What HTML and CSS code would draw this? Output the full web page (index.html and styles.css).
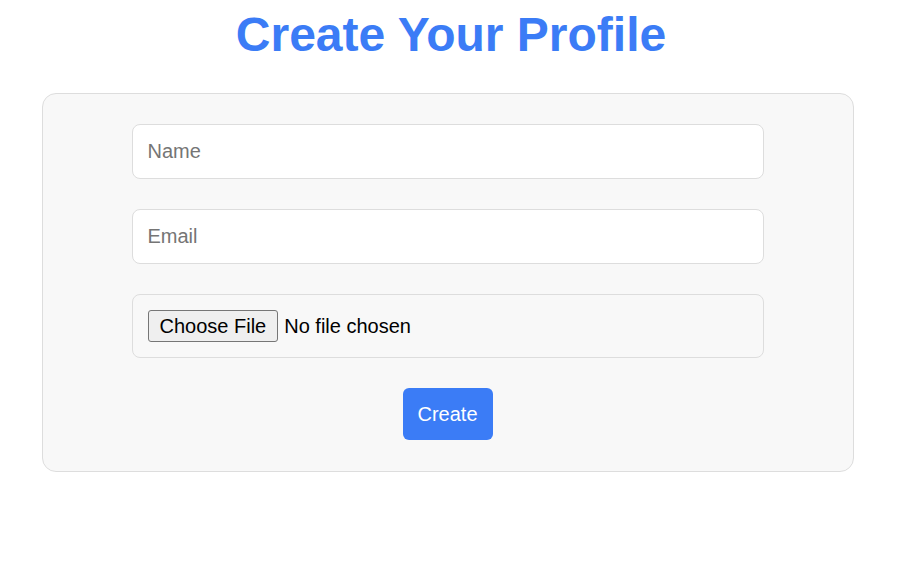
FILE: index.html
```html
<!DOCTYPE html>
<html lang="en">
<head>
<meta charset="utf-8">
<title>Create Your Profile</title>
<link rel="stylesheet" href="styles.css">
</head>
<body>
<main class="page">
  <h1 class="title">Create Your Profile</h1>
  <form class="card">
    <input class="field" type="text" placeholder="Name">
    <input class="field" type="email" placeholder="Email">
    <input class="field file" type="file">
    <button class="submit" type="button">Create</button>
  </form>
</main>
</body>
</html>
```

FILE: styles.css
```css
* { box-sizing: border-box; }
html, body { margin: 0; padding: 0; background: #fff; }
body { font-family: "Liberation Sans", Arial, Helvetica, sans-serif; }
.page {
  padding-top: 7px;
  display: flex;
  flex-direction: column;
  align-items: center;
}
.title {
  margin: 0 0 31px;
  font-size: 48px;
  font-weight: bold;
  line-height: normal;
  color: #3b7cf6;
  text-align: center;
}
.card {
  width: 812px;
  margin-right: 7px;
  border: 1px solid #ddd;
  border-radius: 14px;
  background: #f8f8f8;
  padding: 30px 0 31px;
  display: flex;
  flex-direction: column;
  align-items: center;
  gap: 30px;
}
.field {
  width: 632px;
  height: 55px;
  padding: 0 15px;
  border: 1px solid #ddd;
  border-radius: 8px;
  background: #fff;
  font-family: "Liberation Sans", Arial, sans-serif;
  font-size: 20px;
  color: #000;
  outline: none;
}
.field::placeholder { color: #757575; }
.field.file {
  height: 64px;
  padding: 15px;
  background: #f8f8f8;
  color: #000;
}
.field.file::file-selector-button {
  font-family: "Liberation Sans", Arial, sans-serif;
  font-size: 20px;
  height: 32px;
  padding: 0 11px;
  margin-right: 6px;
  border: 1px solid #767676;
  border-radius: 3px;
  background: #efefef;
  color: #000;
}
.submit {
  width: 90px;
  height: 52px;
  border: none;
  border-radius: 6px;
  background: #3b7cf6;
  color: #fff;
  font-family: "Liberation Sans", Arial, sans-serif;
  font-size: 20px;
  padding: 0;
}
```
